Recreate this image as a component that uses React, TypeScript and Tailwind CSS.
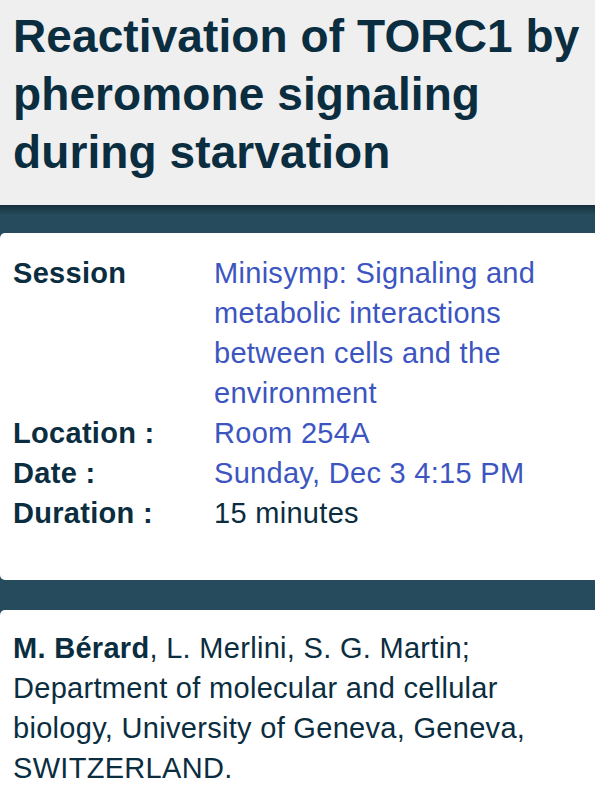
export default function App() {
  const rows = [
    { label: 'Session', value: 'Minisymp: Signaling and metabolic interactions between cells and the environment', link: true },
    { label: 'Location :', value: 'Room 254A', link: true },
    { label: 'Date :', value: 'Sunday, Dec 3 4:15 PM', link: true },
    { label: 'Duration :', value: '15 minutes', link: false },
  ];

  return (
    <main className="min-h-[798px] bg-[#264b5c] font-['Liberation_Sans',Arial,sans-serif] overflow-hidden">
      <header className="bg-[#efefef] pl-[13px] pr-2 pt-[7px] pb-[24px] h-[205px]">
        <h1 className="text-[46px] leading-[58px] font-bold text-[#0b2d40] tracking-[0.1px]">
          Reactivation of TORC1 by pheromone signaling during starvation
        </h1>
      </header>

      <div className="h-[28px] bg-gradient-to-b from-[#15303c] via-[#264b5c] via-[35%] to-[#264b5c]"></div>

      <section className="bg-white rounded-l-[5px] pl-[13px] pr-4 pt-[20px] pb-[47px]">
        <div className="grid grid-cols-[201px_1fr] text-[29px] leading-[40px] tracking-[0.3px]">
          {rows.map((row) => (
            <div key={row.label} className="contents">
              <div className="font-bold text-[#0b2d40]">{row.label}</div>
              <div className={row.link ? 'text-[#3c55c0]' : 'text-[#0b2d40]'}>{row.value}</div>
            </div>
          ))}
        </div>
      </section>

      <div className="h-[30px]"></div>

      <section className="bg-white rounded-l-[5px] pl-[13px] pr-10 pt-[18px] pb-10 text-[29px] leading-[40px] tracking-[0.3px] text-[#0b2d40]">
        <p>
          <span className="font-bold">M. Bérard</span>, L. Merlini, S. G. Martin; Department of molecular and cellular biology, University of Geneva, Geneva, SWITZERLAND.
        </p>
      </section>
    </main>
  );
}
